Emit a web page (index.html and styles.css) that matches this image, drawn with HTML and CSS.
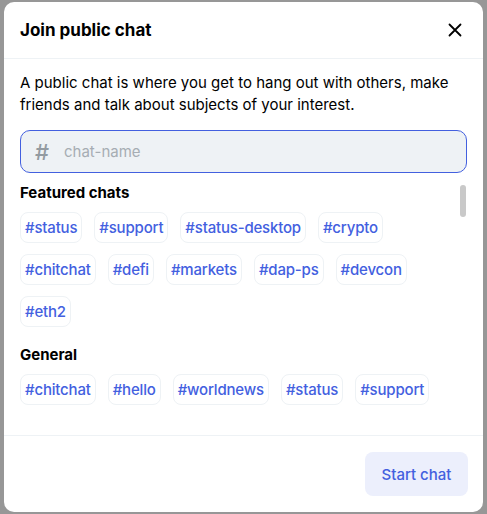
FILE: index.html
```html
<!DOCTYPE html>
<html>
<head>
<meta charset="utf-8">
<link rel="stylesheet" href="styles.css">
</head>
<body>
<div class="modal">
  <div class="header">
    <h1 class="title">Join public chat</h1>
    <button class="close" aria-label="Close">
      <svg width="14" height="14" viewBox="0 0 14 14"><path d="M1.5 1.5 L12.5 12.5 M12.5 1.5 L1.5 12.5" stroke="#000" stroke-width="1.8" stroke-linecap="round"/></svg>
    </button>
  </div>
  <div class="body">
    <p class="desc">A public chat is where you get to hang out with others, make friends and talk about subjects of your interest.</p>
    <div class="input">
      <span class="hash">#</span>
      <span class="placeholder">chat-name</span>
    </div>
    <div class="scroll">
      <div class="thumb"></div>
      <h2 class="section">Featured chats</h2>
      <div class="tags">
        <span class="tag">#status</span>
        <span class="tag">#support</span>
        <span class="tag">#status-desktop</span>
        <span class="tag">#crypto</span>
        <span class="tag">#chitchat</span>
        <span class="tag">#defi</span>
        <span class="tag">#markets</span>
        <span class="tag">#dap-ps</span>
        <span class="tag">#devcon</span>
        <span class="tag">#eth2</span>
      </div>
      <h2 class="section section-gap">General</h2>
      <div class="tags">
        <span class="tag">#chitchat</span>
        <span class="tag">#hello</span>
        <span class="tag">#worldnews</span>
        <span class="tag">#status</span>
        <span class="tag">#support</span>
      </div>
    </div>
  </div>
  <div class="footer">
    <button class="start">Start chat</button>
  </div>
</div>
</body>
</html>
```

FILE: styles.css
```css
* { box-sizing: border-box; }
html, body { margin: 0; padding: 0; }
body {
  background: #979797;
  font-family: Inter, "Noto Sans", sans-serif;
  width: 487px;
  height: 514px;
  overflow: hidden;
  padding: 2px 4px 0 4px;
}
.modal {
  background: #fff;
  border-radius: 10px;
  width: 479px;
  height: 510px;
  display: flex;
  flex-direction: column;
}
.header {
  height: 57px;
  border-bottom: 1px solid #eef2f5;
  display: flex;
  align-items: center;
  justify-content: space-between;
  padding: 0 16px 0 16px;
}
.title {
  margin: 0;
  font-size: 17px;
  font-weight: 700;
  color: #000;
  line-height: 24px;
}
.close {
  border: 0;
  background: none;
  padding: 0;
  width: 14px;
  height: 14px;
  margin-right: 5px;
  display: flex;
}
.body {
  flex: 1;
  padding: 13px 16px 0 16px;
  display: flex;
  flex-direction: column;
  min-height: 0;
}
.desc {
  margin: 0;
  font-size: 15px;
  line-height: 22px;
  color: #000;
}
.input {
  margin-top: 14px;
  height: 43px;
  border: 1px solid #4360df;
  border-radius: 10px;
  background: #eef2f5;
  display: flex;
  align-items: center;
  padding-left: 14px;
}
.hash {
  color: #939ba1;
  font-size: 22px;
  font-weight: 500;
  width: 29px;
}
.placeholder {
  color: #a6adb3;
  font-size: 15px;
}
.scroll {
  position: relative;
  flex: 1;
  padding-top: 9px;
}
.thumb {
  position: absolute;
  right: 1px;
  top: 12px;
  width: 6px;
  height: 32px;
  border-radius: 3px;
  background: #c9c9c9;
}
.section {
  margin: 0;
  font-size: 15px;
  font-weight: 700;
  line-height: 22px;
  color: #000;
}
.section-gap { margin-top: 17px; }
.tags {
  display: flex;
  flex-wrap: wrap;
  gap: 11px 12px;
  margin-top: 8px;
  padding-right: 16px;
}
.tag {
  border: 1px solid #eef2f5;
  border-radius: 8px;
  padding: 4px 4px;
  font-size: 15px;
  line-height: 21px;
  color: #4360df;
  font-weight: 500;
  letter-spacing: -0.18px;
}
.footer {
  height: 77px;
  border-top: 1px solid #eef2f5;
  display: flex;
  justify-content: flex-end;
  align-items: center;
  padding: 0 15px;
}
.start {
  border: 0;
  border-radius: 8px;
  background: #eceffc;
  color: #4360df;
  font-family: Inter, "Noto Sans", sans-serif;
  font-size: 15px;
  font-weight: 500;
  width: 103px;
  height: 44px;
}
```
